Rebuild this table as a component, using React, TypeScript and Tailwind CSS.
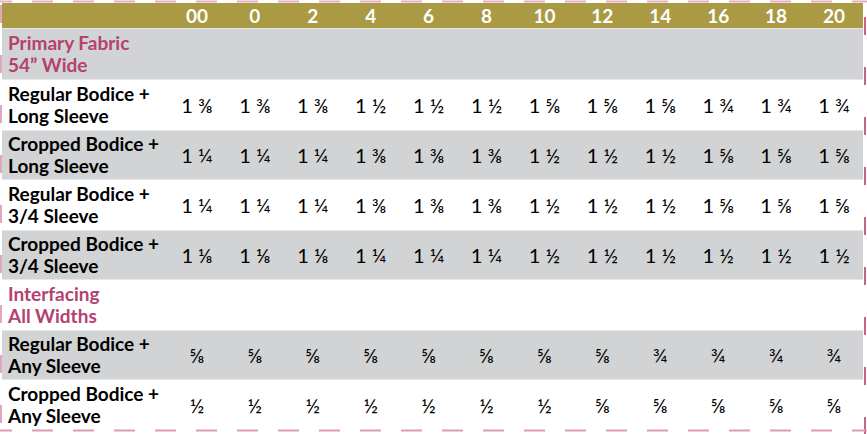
const sizes = ['00', '0', '2', '4', '6', '8', '10', '12', '14', '16', '18', '20'];

type Row =
  | { kind: 'section'; label: [string, string]; shade: boolean }
  | { kind: 'data'; label: [string, string]; values: string[]; shade: boolean };

const rows: Row[] = [
  { kind: 'section', label: ['Primary Fabric', '54\u201D Wide'], shade: true },
  {
    kind: 'data',
    label: ['Regular Bodice +', 'Long Sleeve'],
    values: ['1 ⅜', '1 ⅜', '1 ⅜', '1 ½', '1 ½', '1 ½', '1 ⅝', '1 ⅝', '1 ⅝', '1 ¾', '1 ¾', '1 ¾'],
    shade: false,
  },
  {
    kind: 'data',
    label: ['Cropped Bodice +', 'Long Sleeve'],
    values: ['1 ¼', '1 ¼', '1 ¼', '1 ⅜', '1 ⅜', '1 ⅜', '1 ½', '1 ½', '1 ½', '1 ⅝', '1 ⅝', '1 ⅝'],
    shade: true,
  },
  {
    kind: 'data',
    label: ['Regular Bodice +', '3/4 Sleeve'],
    values: ['1 ¼', '1 ¼', '1 ¼', '1 ⅜', '1 ⅜', '1 ⅜', '1 ½', '1 ½', '1 ½', '1 ⅝', '1 ⅝', '1 ⅝'],
    shade: false,
  },
  {
    kind: 'data',
    label: ['Cropped Bodice +', '3/4 Sleeve'],
    values: ['1 ⅛', '1 ⅛', '1 ⅛', '1 ¼', '1 ¼', '1 ¼', '1 ½', '1 ½', '1 ½', '1 ½', '1 ½', '1 ½'],
    shade: true,
  },
  { kind: 'section', label: ['Interfacing', 'All Widths'], shade: false },
  {
    kind: 'data',
    label: ['Regular Bodice +', 'Any Sleeve'],
    values: ['⅝', '⅝', '⅝', '⅝', '⅝', '⅝', '⅝', '⅝', '¾', '¾', '¾', '¾'],
    shade: true,
  },
  {
    kind: 'data',
    label: ['Cropped Bodice +', 'Any Sleeve'],
    values: ['½', '½', '½', '½', '½', '½', '½', '⅝', '⅝', '⅝', '⅝', '⅝'],
    shade: false,
  },
];

const font = { fontFamily: 'Lato, "Noto Sans", "DejaVu Sans", sans-serif' };

function DashedFrame() {
  return (
    <svg className="pointer-events-none absolute inset-0" width="867" height="434" viewBox="0 0 867 434">
      <line x1="0" y1="1.5" x2="867" y2="1.5" stroke="#e2b0c4" strokeWidth="2" strokeDasharray="21 20" strokeDashoffset="9" />
      <line x1="1" y1="0" x2="1" y2="434" stroke="#d68aa8" strokeWidth="1.5" strokeDasharray="18 32" strokeDashoffset="-5" />
      <line x1="865" y1="0" x2="865" y2="434" stroke="#c9638b" strokeWidth="2" strokeDasharray="18 32" strokeDashoffset="-17" />
      <line x1="0" y1="430.5" x2="867" y2="430.5" stroke="#dc9cb6" strokeWidth="2" strokeDasharray="21 20" strokeDashoffset="9" />
    </svg>
  );
}

export default function App() {
  return (
    <div className="relative h-[434px] w-[867px] overflow-hidden bg-white" style={font}>
      <div className="ml-[2px] mt-[3px] w-[861px]">
        <div className="grid h-[25px] grid-cols-[166px_repeat(12,minmax(0,1fr))] items-center bg-[#a99a43]">
          <div />
          {sizes.map((s) => (
            <div key={s} className="text-center text-[19px] font-bold leading-none text-white">
              {s}
            </div>
          ))}
        </div>

        {rows.map((row, i) => (
          <div
            key={i}
            className={`grid grid-cols-[166px_repeat(12,minmax(0,1fr))] items-center ${
              i === 0 ? 'h-[52px]' : 'h-[50px]'
            } ${row.shade ? 'border-y border-[#e6e7e8] bg-[#d1d3d4]' : 'bg-white'}`}
          >
            <div
              className={`whitespace-nowrap pl-[6px] text-[19px] font-bold leading-[22px] ${
                row.kind === 'section' ? 'text-[#b5416f]' : 'text-black'
              }`}
            >
              <div>{row.label[0]}</div>
              <div>{row.label[1]}</div>
            </div>
            {row.kind === 'data' &&
              row.values.map((v, j) => (
                <div key={j} className="text-center text-[20px] leading-none text-black">
                  {v}
                </div>
              ))}
          </div>
        ))}
      </div>
      <DashedFrame />
    </div>
  );
}
